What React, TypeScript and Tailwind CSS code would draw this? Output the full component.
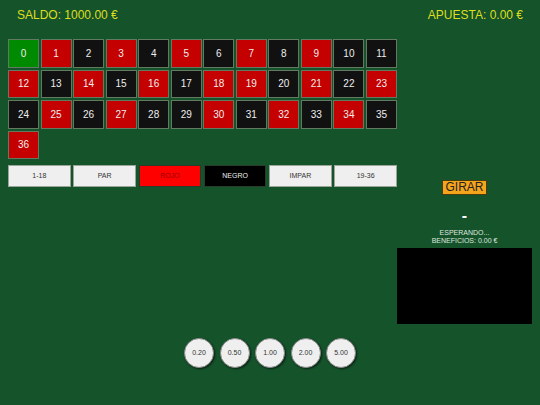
const RED = new Set([1, 3, 5, 7, 9, 12, 14, 16, 18, 19, 21, 23, 25, 27, 30, 32, 34, 36]);

const NUMBERS = Array.from({ length: 37 }, (_, i) => i);

const OUTSIDE = [
  { label: "1-18", cls: "bg-[#efefef] text-[#333] border-[#9aa59a]" },
  { label: "PAR", cls: "bg-[#efefef] text-[#333] border-[#9aa59a]" },
  { label: "ROJO", cls: "bg-[#ff0000] text-[#990000] border-[#2c3a2c]" },
  { label: "NEGRO", cls: "bg-black text-[#eee] border-[#2c3a2c]" },
  { label: "IMPAR", cls: "bg-[#efefef] text-[#333] border-[#9aa59a]" },
  { label: "19-36", cls: "bg-[#efefef] text-[#333] border-[#9aa59a]" },
];

const CHIPS = ["0.20", "0.50", "1.00", "2.00", "5.00"];

function cellColor(n: number) {
  if (n === 0) return "bg-[#008a00]";
  return RED.has(n) ? "bg-[#c40000]" : "bg-[#111111]";
}

export default function App() {
  return (
    <div className="w-[540px] h-[405px] bg-[#15532b] font-['Liberation_Sans',Arial,sans-serif] flex flex-col overflow-hidden">
      <div className="flex justify-between items-center px-[17px] h-[30px] text-[12px] text-[#dede1e]">
        <span>SALDO: 1000.00 €</span>
        <span>APUESTA: 0.00 €</span>
      </div>

      <div className="flex mt-[9px]">
        <div className="ml-[8px] w-[389px] flex flex-col">
          <div className="grid grid-cols-12 gap-x-[1.5px] gap-y-[2px]">
            {NUMBERS.map((n) => (
              <div
                key={n}
                className={`h-[28.5px] border border-[#627a62] flex items-center justify-center text-[10px] text-[#eeeeee] ${cellColor(n)}`}
              >
                {n}
              </div>
            ))}
          </div>
          <div className="grid grid-cols-6 gap-x-[2.6px] mt-[6px]">
            {OUTSIDE.map((b) => (
              <div
                key={b.label}
                className={`h-[22px] border flex items-center justify-center text-[7px] ${b.cls}`}
              >
                {b.label}
              </div>
            ))}
          </div>
        </div>

        <div className="ml-auto mr-[8px] w-[135px] flex flex-col items-center pt-[141px]">
          <div className="h-[15px] px-[2px] bg-[#f5a51c] border border-[#4a3c0c] text-[12px] leading-[13px] text-[#222] flex items-center">
            GIRAR
          </div>
          <div className="mt-[16px] h-[10px] text-[16px] leading-[10px] text-white font-bold">-</div>
          <div className="mt-[8px] text-[7px] leading-[8px] text-[#dfe8df] text-center">
            <div>ESPERANDO...</div>
            <div>BENEFICIOS: 0.00 €</div>
          </div>
          <div className="mt-[3px] w-[135px] h-[76px] bg-black" />
        </div>
      </div>

      <div className="flex justify-center gap-[5.5px] mt-[14px]">
        {CHIPS.map((c) => (
          <div
            key={c}
            className="w-[30px] h-[30px] rounded-full bg-[#efefef] border border-[#888] shadow-[1px_1px_2px_rgba(0,0,0,0.6)] flex items-center justify-center text-[7px] text-[#333]"
          >
            {c}
          </div>
        ))}
      </div>
    </div>
  );
}
